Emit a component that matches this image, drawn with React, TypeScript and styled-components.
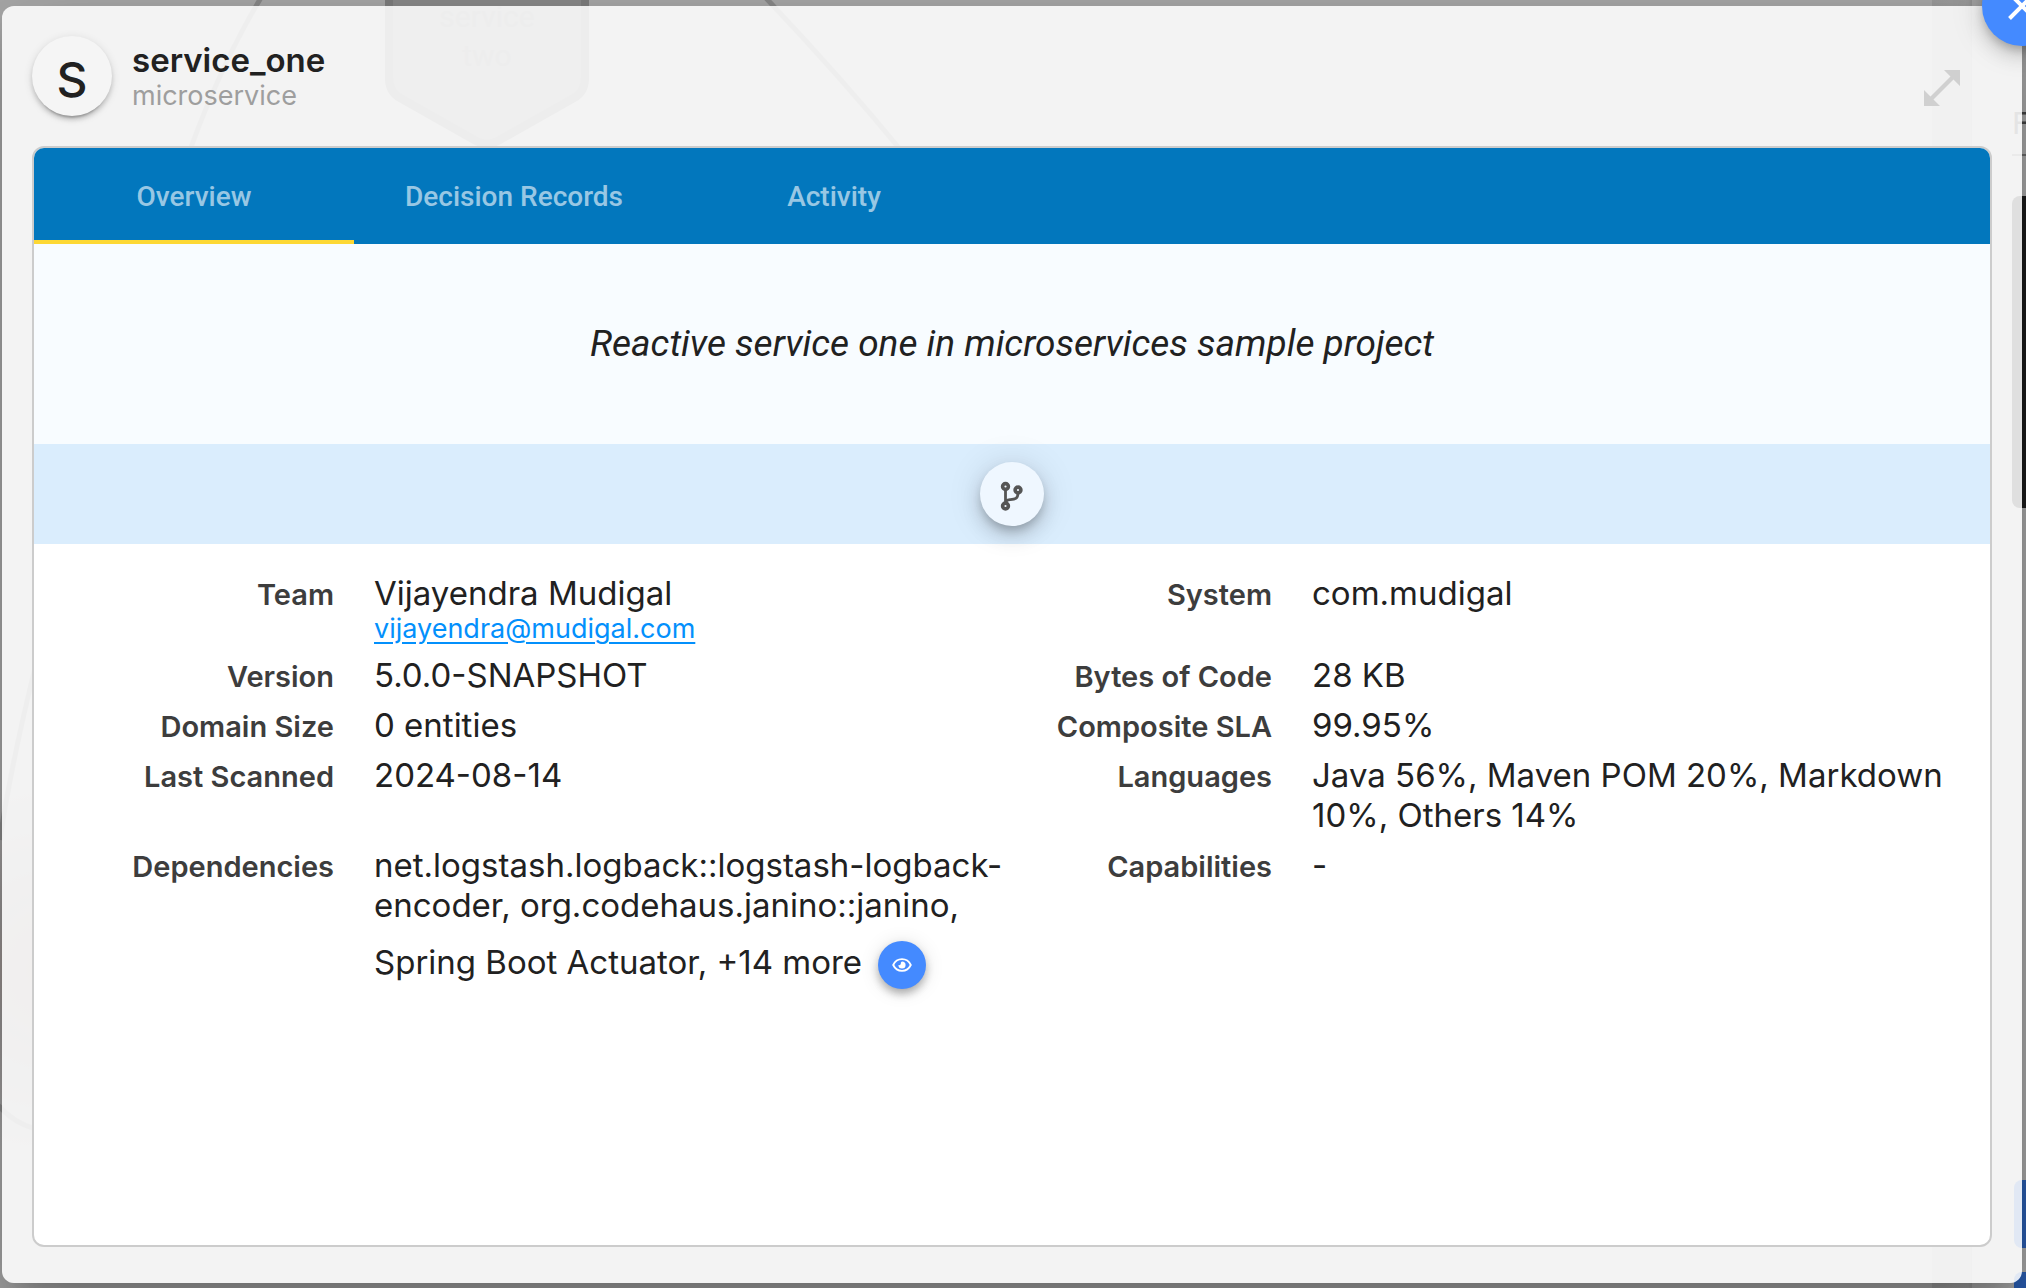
import React from "react";
import styled, { createGlobalStyle } from "styled-components";

const GlobalStyle = createGlobalStyle`
  * { box-sizing: border-box; }
  html, body, #root { height: 100%; }
  body { margin: 0; background: #a9a9a9; color: #212121; font-family: Inter, "Liberation Sans", sans-serif; }
  dl, dd, h1, p { margin: 0; }
`;

const Page = styled.div`
  position: relative;
  display: flex;
  min-height: 100%;
  padding: 6px 4px 5px 2px;
  overflow: hidden;
`;

const Diagram = styled.svg`
  position: absolute;
  inset: 0;
  width: 100%;
  height: 100%;
`;

const SidePanel = styled.aside`
  position: absolute;
  inset: 0 0 0 auto;
  width: 94px;
  overflow: hidden;
  background: #a9a9a9;
`;

const Splitter = styled.div`
  width: 40px;
  height: 100%;
  background: linear-gradient(90deg, #9b9b9b, #9f9f9f 90%, #979797);
`;

const SideTitle = styled.div`
  position: absolute;
  top: 98px;
  right: 0;
  width: 14px;
  font: 32px/50px Roboto, sans-serif;
  color: #444;
`;

const SideRule = styled.div`
  position: absolute;
  top: 154px;
  right: 0;
  width: 14px;
  height: 2px;
  background: #6a6a6a;
`;

const SideBlock = styled.div<{ $top: number; $width: number; $height: number; $color: string }>`
  position: absolute;
  top: ${(p) => p.$top}px;
  right: 0;
  width: ${(p) => p.$width}px;
  height: ${(p) => p.$height}px;
  border-radius: 8px 0 0 8px;
  background: ${(p) => p.$color};
`;

const Dialog = styled.section`
  position: relative;
  flex: 1;
  display: flex;
  flex-direction: column;
  min-width: 0;
  padding: 0 30px 36px;
  border-radius: 12px;
  background: rgba(255, 255, 255, 0.86);
  box-shadow: 0 22px 30px -14px rgba(0, 0, 0, 0.2), 0 48px 76px 6px rgba(0, 0, 0, 0.14), 0 18px 92px 16px rgba(0, 0, 0, 0.12);
`;

const Header = styled.header`
  display: flex;
  align-items: center;
  gap: 20px;
  height: 140px;
`;

const Avatar = styled.div`
  display: flex;
  align-items: center;
  justify-content: center;
  width: 80px;
  height: 80px;
  padding-top: 8px;
  border-radius: 50%;
  background: #f5f5f5;
  box-shadow: 0 6px 2px -4px rgba(0, 0, 0, 0.2), 0 4px 4px rgba(0, 0, 0, 0.14), 0 2px 10px rgba(0, 0, 0, 0.12);
  font-size: 48px;
  font-weight: 500;
  line-height: 48px;
`;

const Heading = styled.div`
  flex: 1;
  display: flex;
  flex-direction: column;
  padding-top: 4px;
`;

const Title = styled.h1`
  font-size: 33px;
  font-weight: 600;
  line-height: 36px;
`;

const Subtitle = styled.p`
  font-size: 27px;
  line-height: 36px;
  color: #9e9e9e;
`;

const IconButton = styled.button`
  display: grid;
  place-items: center;
  width: 96px;
  height: 96px;
  margin: 24px 2px 0 0;
  padding: 0;
  border: 0;
  background: none;
  color: #d0d0d0;
`;

const RoundButton = styled.button<{ $size: number; $bg: string; $fg: string }>`
  display: inline-grid;
  place-items: center;
  width: ${(p) => p.$size}px;
  height: ${(p) => p.$size}px;
  padding: 0;
  border: 0;
  border-radius: 50%;
  background: ${(p) => p.$bg};
  color: ${(p) => p.$fg};
  box-shadow: 0 6px 10px -2px rgba(0, 0, 0, 0.2), 0 10px 20px rgba(0, 0, 0, 0.14), 0 2px 36px rgba(0, 0, 0, 0.12);
`;

const SourceButton = styled(RoundButton)`
  padding-top: 4px;
`;

const CloseButton = styled(RoundButton)`
  position: absolute;
  top: -40px;
  right: -40px;
`;

const MoreButton = styled(RoundButton)`
  margin: 16px 0 16px 16px;
  vertical-align: middle;
  box-shadow: 0 6px 10px -2px rgba(0, 0, 0, 0.2), 0 4px 10px rgba(0, 0, 0, 0.14), 0 2px 20px rgba(0, 0, 0, 0.12);
`;

const Card = styled.div`
  flex: 1;
  overflow: hidden;
  border: 2px solid #cccccc;
  border-radius: 12px;
  background: #fff;
`;

const Tabs = styled.nav`
  display: flex;
  height: 96px;
  background: #0277bd;
`;

const Tab = styled.button<{ $active?: boolean }>`
  width: 320px;
  padding: 6px 0 0;
  border: 0;
  border-bottom: 4px solid ${(p) => (p.$active ? "#fdd835" : "transparent")};
  background: none;
  color: rgba(255, 255, 255, 0.6);
  font: 500 28px/40px Roboto, sans-serif;
`;

const Summary = styled.p`
  padding: 76px 40px;
  background: #f8fcff;
  font: italic 37px/48px Roboto, sans-serif;
  text-align: center;
`;

const ActionBar = styled.div`
  display: flex;
  align-items: center;
  justify-content: center;
  height: 100px;
  background: #daedfd;
`;

const Details = styled.dl`
  display: grid;
  grid-template-columns: 1fr 1fr;
  padding: 24px 40px;
`;

const Field = styled.div`
  display: grid;
  grid-template-columns: 260px minmax(0, 1fr);
  align-items: baseline;
  align-content: start;
  column-gap: 40px;
  padding: 5px 0;
`;

const Label = styled.dt`
  font-size: 29px;
  font-weight: 600;
  line-height: 36px;
  color: #3d3d3d;
  text-align: right;
`;

const Value = styled.dd`
  font-size: 33px;
  line-height: 40px;
`;

const Email = styled.a`
  display: block;
  font-size: 27px;
  line-height: 32px;
  color: #0390fc;
  text-underline-offset: 4px;
`;

const fields: { label: string; value: React.ReactNode }[] = [
  {
    label: "Team",
    value: (
      <>
        Vijayendra Mudigal
        <Email href="mailto:vijayendra@mudigal.com">vijayendra@mudigal.com</Email>
      </>
    ),
  },
  { label: "System", value: "com.mudigal" },
  { label: "Version", value: "5.0.0-SNAPSHOT" },
  { label: "Bytes of Code", value: "28 KB" },
  { label: "Domain Size", value: "0 entities" },
  { label: "Composite SLA", value: "99.95%" },
  { label: "Last Scanned", value: "2024-08-14" },
  { label: "Languages", value: "Java 56%, Maven POM 20%, Markdown 10%, Others 14%" },
  {
    label: "Dependencies",
    value: (
      <>
        net.logstash.logback::logstash-logback-encoder, org.codehaus.janino::janino, Spring Boot Actuator, +14 more
        <MoreButton $size={48} $bg="#448aff" $fg="#fff" aria-label="Show all dependencies">
          <EyeIcon />
        </MoreButton>
      </>
    ),
  },
  { label: "Capabilities", value: "-" },
];

function EyeIcon() {
  return (
    <svg width="20" height="20" viewBox="0 0 20 20" fill="none" stroke="currentColor" strokeWidth="1.8">
      <path d="M1.2 10C3 6.200 6.200 4.200 10 4.200s7 2 8.800 5.800c-1.800 3.800-5 5.800-8.800 5.800S3 13.800 1.200 10z" />
      <path d="M10 6.400a3.600 3.600 0 1 1-3.600 3.600 1.800 1.800 0 0 0 2.400-2.200A3.600 3.600 0 0 1 10 6.400z" fill="currentColor" stroke="none" />
    </svg>
  );
}

function BranchIcon() {
  return (
    <svg width="24" height="30" viewBox="0 0 24 30" fill="none" stroke="currentColor" strokeWidth="3.6">
      <circle cx="5.500" cy="5.500" r="2.900" />
      <circle cx="5.500" cy="25" r="2.900" />
      <circle cx="18" cy="9" r="2.900" />
      <path d="M5.500 8.500V22M18 12c0 6-3.500 6.200-8 6.700-2.500.300-4.500 1-4.500 3.300" strokeWidth="2.800" />
    </svg>
  );
}

function Backdrop() {
  return (
    <Diagram aria-hidden="true">
      <defs>
        <radialGradient id="node-glow">
          <stop offset="0" stopColor="#a08c84" />
          <stop offset="0.4" stopColor="#989494" />
          <stop offset="1" stopColor="#a9a9a9" />
        </radialGradient>
      </defs>
      <ellipse cx="60" cy="970" rx="200" ry="190" fill="url(#node-glow)" />
      <g fill="none" stroke="#8a8a8a" strokeWidth="5">
        <path d="M262-4Q222 62 190 150L34 672Q10 770 0 840" />
        <path d="M-6 1100Q10 1122 36 1129" />
        <path d="M764-4Q840 76 904 154" />
      </g>
      <path
        d="M389-40V78Q389 92 400 98L476 141Q487 147 498 141L574 98Q585 92 585 78V-40"
        fill="#8b8b8b"
        stroke="#7e7e7e"
        strokeWidth="8"
      />
      <g fill="#7e7e7e" fontFamily="Roboto, sans-serif" fontSize="30" textAnchor="middle">
        <text x="487" y="27">service</text>
        <text x="487" y="66">two</text>
      </g>
    </Diagram>
  );
}

export default function App() {
  return (
    <>
      <GlobalStyle />
      <Page>
        <Backdrop />
        <SidePanel aria-hidden="true">
          <Splitter />
          <SideTitle>F</SideTitle>
          <SideRule />
          <SideBlock $top={196} $width={14} $height={312} $color="#1c1c1c" />
          <SideBlock $top={1180} $width={12} $height={68} $color="#2a5db0" />
          <SideBlock $top={1272} $width={12} $height={68} $color="#2a5db0" />
        </SidePanel>
        <Dialog role="dialog" aria-labelledby="service-title">
          <Header>
            <Avatar>S</Avatar>
            <Heading>
              <Title id="service-title">service_one</Title>
              <Subtitle>microservice</Subtitle>
            </Heading>
            <IconButton aria-label="Expand">
              <svg width="36" height="36" viewBox="0 0 36 36" fill="currentColor">
                <path d="M20 0h16v16l-6.500-6.500-20 20L16 36H0V20l6.500 6.500 20-20z" />
              </svg>
            </IconButton>
          </Header>
          <Card>
            <Tabs>
              <Tab $active>Overview</Tab>
              <Tab>Decision Records</Tab>
              <Tab>Activity</Tab>
            </Tabs>
            <Summary>Reactive service one in microservices sample project</Summary>
            <ActionBar>
              <SourceButton $size={64} $bg="#eff7ff" $fg="#555" aria-label="Source repository">
                <BranchIcon />
              </SourceButton>
            </ActionBar>
            <Details>
              {fields.map((f) => (
                <Field key={f.label}>
                  <Label>{f.label}</Label>
                  <Value>{f.value}</Value>
                </Field>
              ))}
            </Details>
          </Card>
          <CloseButton $size={80} $bg="#448aff" $fg="#fff" aria-label="Close">
            <svg width="28" height="28" viewBox="0 0 28 28" fill="none" stroke="currentColor" strokeWidth="4">
              <path d="M1.500 1.500l25 25M26.500 1.500l-25 25" />
            </svg>
          </CloseButton>
        </Dialog>
      </Page>
    </>
  );
}
